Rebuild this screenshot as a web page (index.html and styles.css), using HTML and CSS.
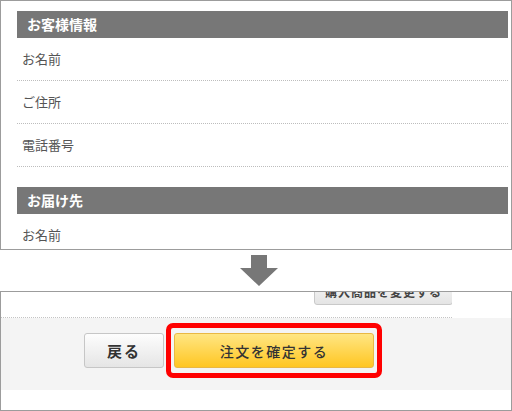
FILE: index.html
```html
<!DOCTYPE html>
<html lang="ja">
<head>
<meta charset="utf-8">
<link rel="stylesheet" href="styles.css">
</head>
<body>
<div class="panel panel-top">
  <section class="group">
    <h2 class="group-title">お客様情報</h2>
    <div class="row">お名前</div>
    <div class="row">ご住所</div>
    <div class="row">電話番号</div>
  </section>
  <section class="group group-next">
    <h2 class="group-title">お届け先</h2>
    <div class="row">お名前</div>
  </section>
</div>
<div class="arrow-wrap">
  <svg class="arrow" width="40" height="31" viewBox="0 0 40 31">
    <polygon points="12,0 28,0 28,13 39,13 20,31 1,13 12,13" fill="#777"/>
  </svg>
</div>
<div class="panel panel-bottom">
  <div class="change-area">
    <button class="btn btn-change">購入商品を変更する</button>
  </div>
  <div class="action-area">
    <button class="btn btn-back">戻る</button>
    <div class="highlight">
      <button class="btn btn-confirm">注文を確定する</button>
    </div>
  </div>
</div>
</body>
</html>
```

FILE: styles.css
```css
* { box-sizing: border-box; }
html, body {
  margin: 0;
  padding: 0;
  background: #fff;
  font-family: "Noto Sans CJK JP", "Noto Sans", sans-serif;
}
.panel {
  width: 512px;
  border: 1px solid #9c9c9c;
  overflow: hidden;
}
.panel-top {
  height: 250px;
  padding: 10px 3px 0 16px;
}
.group-title {
  margin: 0;
  height: 27px;
  line-height: 27px;
  background: #777;
  color: #fff;
  font-size: 14px;
  font-weight: bold;
  padding-left: 10px;
}
.row {
  height: 43px;
  line-height: 42px;
  border-bottom: 1px dotted #bdbdbd;
  font-size: 13px;
  color: #555;
  padding-left: 5px;
}
.group-next { margin-top: 20px; }
.group-next .row { border-bottom: none; }
.arrow-wrap {
  height: 41px;
  padding: 5px 0 0 239px;
}
.arrow { display: block; }
.panel-bottom {
  height: 120px;
}
.change-area {
  width: 451px;
  height: 26px;
  border-bottom: 1px dotted #c4c4c4;
  overflow: hidden;
  display: flex;
  justify-content: flex-end;
  align-items: flex-start;
}
.btn {
  font-family: "Noto Sans CJK JP", "Noto Sans", sans-serif;
  cursor: pointer;
  padding: 0;
}
.btn-change {
  margin-top: -15px;
  margin-right: -1px;
  width: 139px;
  height: 28px;
  border: 1px solid #c9c9c9;
  border-radius: 3px;
  background: linear-gradient(#fafafa, #e4e4e4);
  font-size: 12px;
  font-weight: bold;
  color: #444;
  letter-spacing: 1px;
}
.action-area {
  height: 72px;
  background: #f4f4f4;
  display: flex;
  align-items: flex-start;
  gap: 10px;
  padding: 15px 0 0 83px;
}
.btn-back {
  width: 80px;
  height: 35px;
  border: 1px solid #c6c6c6;
  border-radius: 3px;
  background: linear-gradient(#fdfdfd, #e5e5e5);
  font-size: 15px;
  font-weight: bold;
  color: #333;
  letter-spacing: 2px;
}
.highlight {
  position: relative;
}
.highlight::after {
  content: "";
  position: absolute;
  left: -8px;
  right: -8px;
  top: -10px;
  bottom: -10px;
  border: 5px solid #f00;
  border-radius: 7px;
  pointer-events: none;
}
.btn-confirm {
  display: block;
  width: 200px;
  height: 35px;
  border: 1px solid #e9b843;
  border-radius: 3px;
  background: linear-gradient(#ffe683, #ffc622);
  font-size: 14px;
  font-weight: 500;
  color: #333;
  letter-spacing: 1.5px;
}
```
